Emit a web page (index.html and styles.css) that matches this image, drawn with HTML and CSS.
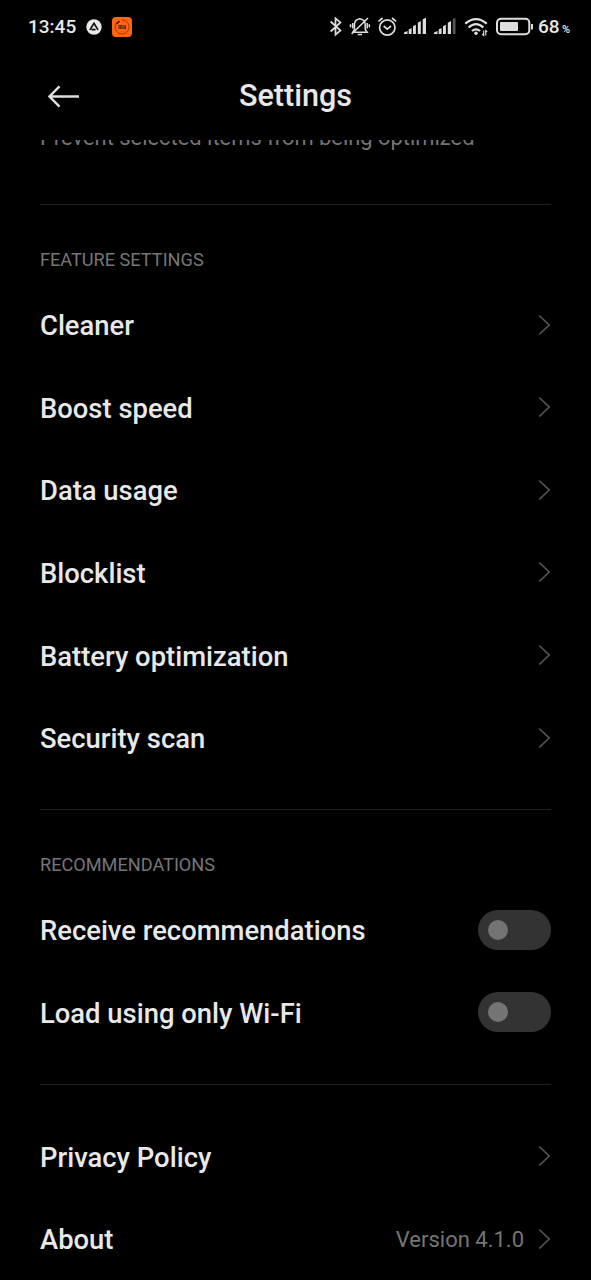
FILE: index.html
```
<!DOCTYPE html>
<html lang="en">
<head>
<meta charset="utf-8">
<title>Settings</title>
<link rel="stylesheet" href="styles.css">
</head>
<body>
<svg class="defs" width="0" height="0"><symbol id="chevron" viewBox="0 0 13 22"><path d="M1.2 1.5L11.2 11L1.2 20.5" fill="none" stroke="currentColor" stroke-width="1.6"/></symbol></svg>
<div class="screen">
  <header class="status">
    <span class="clock">13:45</span>
    <svg class="app-a" width="16" height="16" viewBox="0 0 16 16"><circle cx="8" cy="8" r="7.7" fill="#e9e9e9"/><path d="M3.9 10.9L8 4.4L12 10.9M9.5 10.6H5.5" fill="none" stroke="#111" stroke-width="1.7"/></svg>
    <svg class="app-mi" width="20" height="20" viewBox="0 0 20 20"><rect width="20" height="20" rx="4" fill="#ff6411"/><path d="M5 5.2A7 7 0 1 0 10 3" fill="none" stroke="#9c3b08" stroke-width="1"/><path d="M4.3 7L7.5 4" stroke="#391504" stroke-width="1.5"/><path d="M7 12V8.5H10V12M8.6 9.5V12M12 8.2V12.2M13.4 8.2V12" fill="none" stroke="#5a2208" stroke-width="1.1"/></svg>
    <svg class="tray" width="212" height="26" viewBox="326 14 212 26" fill="none" stroke="#dedede" stroke-width="1.7">
      <path d="M330.6 21.5L340.5 30.5L335.5 34.7V18.3L340.5 22.5L330.6 31.5"/>
      <path d="M354.5 29.5V23.8Q355 19.4 359.8 18.7Q364.7 19.4 365.2 24V29.5L367.2 32.2H352.8L354.5 29.5M357.8 34.5H362M351.7 34L368 18M352.7 23V28.5M350.5 24.3V27.3M367.2 23V28.5M369.3 24.3V27.3" stroke-width="1.5"/>
      <circle cx="387.3" cy="27.5" r="7.7"/><path d="M383.7 26L387.2 29.2L391 26M378.5 21.3L382.6 18M396.1 21.3L392 18"/>
      <g fill="#dedede" stroke="none"><path d="M404 34V32.4L407.5 31V34ZM408.7 34V29.5L411.6 28V34ZM413 34V26.2L415.9 24.7V34ZM417.8 34V22.7L420.8 21V34ZM422.7 34V19.2L426 17.7V34Z"/><path d="M434 34V32.4L437.5 31V34ZM438.7 34V29.5L441.6 28V34ZM443 34V26.2L445.9 24.7V34ZM447.8 34V22.7L451 21V34Z"/><path d="M452.7 34V19.2L455.5 17.7V34Z" fill="#555"/></g>
      <path stroke-width="2.2" d="M465.2 23.6Q476 14.5 486.8 23.6M468.6 27.5Q476 20.7 483.4 27.5M472 31Q476 27.7 480 31"/><circle cx="476" cy="33.3" r="1.8" fill="#dedede" stroke="none"/><path stroke-width="1.1" d="M483.7 30.5V35.5L482.2 34M485.7 35.5V30.5L487.2 32"/>
      <rect x="497" y="18.8" width="32.3" height="15.4" rx="4" stroke-width="2"/><rect x="500" y="22" width="18" height="9" rx="1" fill="#dedede" stroke="none"/><path d="M532 24V29.5" stroke-width="2"/>
    </svg>
    <span class="charge">68</span><span class="percent">%</span>
  </header>
  <div class="titlebar">
    <svg class="back" width="32" height="24" viewBox="0 0 32 24" fill="none" stroke="#ddd" stroke-width="2.4"><path d="M31 12.5H1.5M11.5 2.3L1.5 12.5L11.5 22.7"/></svg>
    <h1>Settings</h1>
  </div>
  <main>
    <div class="clip"><p>Prevent selected items from being optimized</p></div>
    <section class="features">
      <h2>FEATURE SETTINGS</h2>
      <div class="row"><span>Cleaner</span><svg class="chev"><use href="#chevron"/></svg></div>
      <div class="row"><span>Boost speed</span><svg class="chev"><use href="#chevron"/></svg></div>
      <div class="row"><span>Data usage</span><svg class="chev"><use href="#chevron"/></svg></div>
      <div class="row"><span>Blocklist</span><svg class="chev"><use href="#chevron"/></svg></div>
      <div class="row"><span>Battery optimization</span><svg class="chev"><use href="#chevron"/></svg></div>
      <div class="row"><span>Security scan</span><svg class="chev"><use href="#chevron"/></svg></div>
    </section>
    <section class="recommendations">
      <h2>RECOMMENDATIONS</h2>
      <div class="row"><span>Receive recommendations</span><i class="toggle"></i></div>
      <div class="row"><span>Load using only Wi-Fi</span><i class="toggle"></i></div>
    </section>
    <section class="info">
      <div class="row"><span>Privacy Policy</span><svg class="chev"><use href="#chevron"/></svg></div>
      <div class="row"><span>About</span><span class="version">Version 4.1.0</span><svg class="chev"><use href="#chevron"/></svg></div>
    </section>
  </main>
</div>
</body>
</html>
```
FILE: styles.css
```
* { box-sizing: border-box; margin: 0; padding: 0; }
body { background: #000; overflow: hidden; font-family: Roboto, sans-serif; color: #e8e8e8; }
.defs { display: block; }
.screen { width: 591px; height: 1280px; overflow: hidden; background: #000; }
.status { height: 53px; display: flex; align-items: center; padding-left: 28px; }
.clock { width: 58px; font-size: 19px; font-weight: 500; }
.app-a { margin-right: 10px; }
.tray { margin-left: 194px; }
.charge { font-size: 19px; font-weight: 500; width: 24px; }
.percent { font-size: 11px; font-weight: 500; padding-top: 5px; }
.titlebar { height: 87px; display: grid; grid-template-columns: 32px 1fr 32px; align-items: center; padding: 0 48px 1px; }
h1 { font-size: 30.6px; font-weight: 500; text-align: center; line-height: 34px; padding-bottom: 1px; }
main { padding: 0 40px; }
.clip { height: 64px; overflow: hidden; }
.clip p { margin-top: -15px; font-size: 21.9px; line-height: 26px; color: #757575; white-space: nowrap; }
section { border-top: 1px solid #202020; }
.features { height: 605px; padding-top: 43px; }
.recommendations { height: 275px; padding-top: 43px; }
.info { padding-top: 30px; }
h2 { height: 35.4px; font-size: 18.15px; font-weight: 400; line-height: 24px; color: #767676; }
.row { height: 82.6px; display: flex; align-items: center; justify-content: space-between; font-size: 27.4px; line-height: 32px; font-weight: 500; }
.row > span:first-child { padding-top: 3px; }
.chev { width: 13px; height: 22px; color: #575757; flex: none; }
.toggle { width: 73px; height: 40px; border-radius: 20px; background: #333; padding: 10px; }
.toggle::before { content: ""; display: block; width: 20px; height: 20px; border-radius: 50%; background: #747474; }
.version { margin-left: auto; margin-right: 14px; padding-top: 2px; font-size: 22px; font-weight: 400; color: #757575; }
```
